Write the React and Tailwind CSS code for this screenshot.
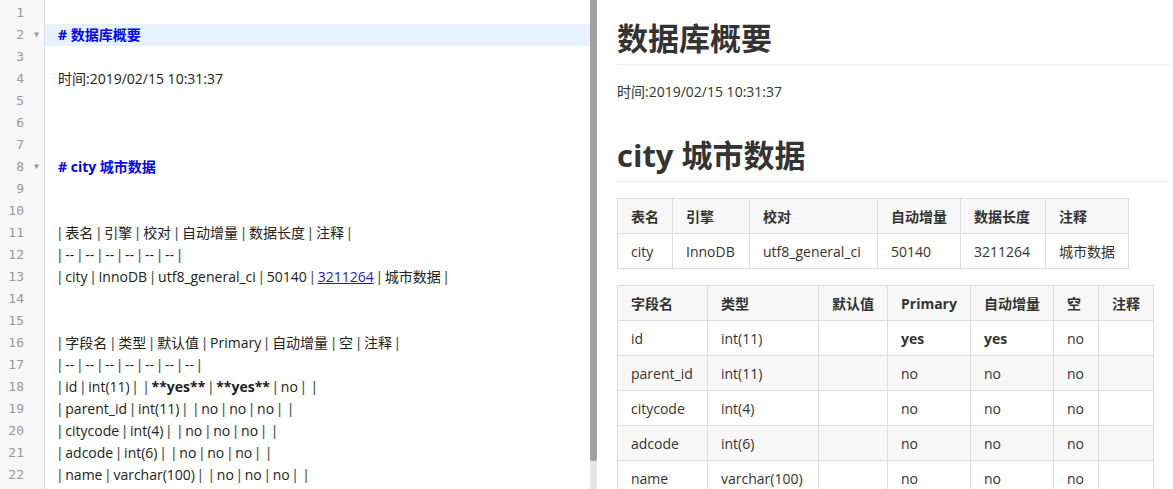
import React from "react";

const font = "font-['Open_Sans','Noto_Sans_CJK_SC',sans-serif]";

const Pipe = () => (
  <span className="text-[#555] font-['Liberation_Sans',sans-serif]">|</span>
);

// split a markdown table row into pipes + cells
function Row({ cells }) {
  return (
    <>
      <Pipe />
      {cells.map((c, i) => (
        <React.Fragment key={i}>
          {" "}
          {c}
          {" "}
          <Pipe />
        </React.Fragment>
      ))}
    </>
  );
}

const strong = (t) => <b className="font-bold">**{t}**</b>;

const lines = [
  null,
  { head: "# 数据库概要", active: true },
  null,
  "时间:2019/02/15 10:31:37",
  null,
  null,
  null,
  { head: "# city 城市数据" },
  null,
  null,
  <Row cells={["表名", "引擎", "校对", "自动增量", "数据长度", "注释"]} />,
  <Row cells={["--", "--", "--", "--", "--", "--"]} />,
  <Row
    cells={[
      "city",
      "InnoDB",
      "utf8_general_ci",
      "50140",
      <span className="text-[#1a1ad0] underline">3211264</span>,
      "城市数据",
    ]}
  />,
  null,
  null,
  <Row cells={["字段名", "类型", "默认值", "Primary", "自动增量", "空", "注释"]} />,
  <Row cells={["--", "--", "--", "--", "--", "--", "--"]} />,
  <Row cells={["id", "int(11)", "", strong("yes"), strong("yes"), "no", ""]} />,
  <Row cells={["parent_id", "int(11)", "", "no", "no", "no", ""]} />,
  <Row cells={["citycode", "int(4)", "", "no", "no", "no", ""]} />,
  <Row cells={["adcode", "int(6)", "", "no", "no", "no", ""]} />,
  <Row cells={["name", "varchar(100)", "", "no", "no", "no", ""]} />,
];

function Editor() {
  return (
    <div className="flex w-[590px] h-full overflow-hidden bg-white pt-[2px]">
      <div className="w-[45px] shrink-0 bg-[#f7f7f7] border-r border-[#dddddd] -mt-[2px] pt-[2px]">
        {lines.map((l, i) => (
          <div
            key={i}
            className="h-[22px] leading-[22px] flex items-center text-[13px] text-[#999] font-['DejaVu_Sans_Mono',monospace]"
          >
            <span className="w-[25px] text-right pr-[1px]">{i + 1}</span>
            {l && l.head && (
              <span className="ml-[9px] text-[8px] text-[#999]">▼</span>
            )}
          </div>
        ))}
      </div>
      <div className="flex-1 min-w-0">
        {lines.map((l, i) => {
          const isHead = l && l.head;
          return (
            <div
              key={i}
              className={`h-[22px] leading-[22px] pl-[13px] whitespace-pre text-[14px] text-[#222] ${font} ${
                isHead && l.active ? "bg-[#e8f2fe]" : ""
              }`}
            >
              {isHead ? (
                <span className="text-[#0000ff] font-bold">{l.head}</span>
              ) : (
                l
              )}
            </div>
          );
        })}
      </div>
    </div>
  );
}

function Scrollbar() {
  return (
    <div className="w-[7px] h-full bg-[#e6e6e6] flex flex-col">
      <div className="h-[461px] bg-[#a0a0a0] rounded-b-[2px]" />
    </div>
  );
}

const th = "border border-[#dddddd] bg-[#f8f8f8] px-[13px] h-[35px] text-left font-bold";
const td = "border border-[#dddddd] px-[13px] h-[35px] text-left font-normal";

function Preview() {
  const t1w = ["w-[55px]", "w-[77px]", "w-[128px]", "w-[83px]", "w-[85px]", "w-[83px]"];
  const t1h = ["表名", "引擎", "校对", "自动增量", "数据长度", "注释"];
  const t1r = ["city", "InnoDB", "utf8_general_ci", "50140", "3211264", "城市数据"];

  const t2w = ["w-[90px]", "w-[111px]", "w-[69px]", "w-[83px]", "w-[83px]", "w-[45px]", "w-[55px]"];
  const t2h = ["字段名", "类型", "默认值", "Primary", "自动增量", "空", "注释"];
  const t2rows = [
    ["id", "int(11)", "", "yes", "yes", "no", "", true],
    ["parent_id", "int(11)", "", "no", "no", "no", ""],
    ["citycode", "int(4)", "", "no", "no", "no", ""],
    ["adcode", "int(6)", "", "no", "no", "no", ""],
    ["name", "varchar(100)", "", "no", "no", "no", ""],
  ];

  return (
    <div className={`flex-1 min-w-0 h-full overflow-hidden bg-white pl-[20px] pr-[3px] text-[14px] text-[#333] ${font}`}>
      <h1 className="mt-[18px] leading-[40px] text-[31px] font-bold border-b border-[#eeeeee] pb-[6px]">
        数据库概要
      </h1>
      <p className="mt-[16px] leading-[22px]">时间:2019/02/15 10:31:37</p>
      <h1 className="mt-[32px] leading-[40px] text-[31px] font-bold border-b border-[#eeeeee] pb-[6px]">
        city 城市数据
      </h1>
      <table className="mt-[16px] border-collapse table-fixed">
        <thead>
          <tr>
            {t1h.map((h, i) => (
              <th key={i} className={`${th} ${t1w[i]}`}>
                {h}
              </th>
            ))}
          </tr>
        </thead>
        <tbody>
          <tr>
            {t1r.map((c, i) => (
              <td key={i} className={td}>
                {c}
              </td>
            ))}
          </tr>
        </tbody>
      </table>
      <table className="mt-[16px] border-collapse table-fixed">
        <thead>
          <tr>
            {t2h.map((h, i) => (
              <th key={i} className={`${th} ${t2w[i]}`}>
                {h}
              </th>
            ))}
          </tr>
        </thead>
        <tbody>
          {t2rows.map((r, ri) => (
            <tr key={ri} className={ri % 2 === 1 ? "bg-[#f8f8f8]" : "bg-white"}>
              {r.slice(0, 7).map((c, i) => (
                <td
                  key={i}
                  className={`${td} ${r[7] && (i === 3 || i === 4) ? "!font-bold" : ""}`}
                >
                  {c}
                </td>
              ))}
            </tr>
          ))}
        </tbody>
      </table>
    </div>
  );
}

export default function App() {
  return (
    <div className="flex w-[1173px] h-[489px] overflow-hidden bg-white">
      <Editor />
      <Scrollbar />
      <Preview />
    </div>
  );
}
